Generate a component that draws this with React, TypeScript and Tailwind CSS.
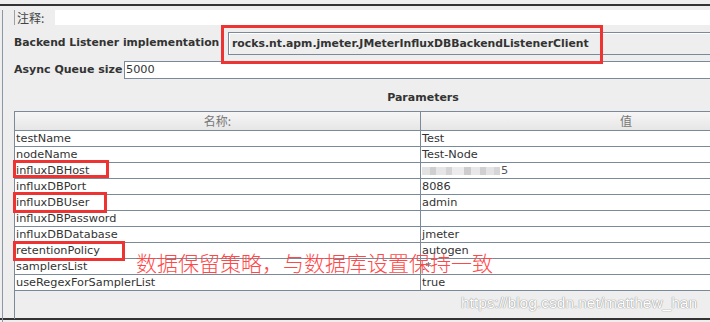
const params: [string, string | null][] = [
  ['testName', 'Test'],
  ['nodeName', 'Test-Node'],
  ['influxDBHost', null],
  ['influxDBPort', '8086'],
  ['influxDBUser', 'admin'],
  ['influxDBPassword', ''],
  ['influxDBDatabase', 'jmeter'],
  ['retentionPolicy', 'autogen'],
  ['samplersList', '.*'],
  ['useRegexForSamplerList', 'true'],
];

// pixelated (masked) host address
function MaskedHost() {
  return (
    <div className="flex items-center h-full">
      <span className="w-[8px] h-[8px] bg-[#e2e2e2]" />
      <span className="w-[6px] h-[8px] bg-[#cfcfcf]" />
      <span className="w-[10px] h-[8px] bg-[#e6e6e6]" />
      <span className="w-[6px] h-[8px] bg-[#d4d4d4]" />
      <span className="w-[12px] h-[8px] bg-[#ececec]" />
      <span className="w-[7px] h-[8px] bg-[#cdcdcd]" />
      <span className="w-[9px] h-[8px] bg-[#e8e8e8]" />
      <span className="w-[6px] h-[8px] bg-[#d0d0d0]" />
      <span className="w-[8px] h-[8px] bg-[#e4e4e4]" />
      <span className="w-[6px] h-[8px] bg-[#d6d6d6]" />
      <span className="text-[#555] ml-[1px]">5</span>
    </div>
  );
}

export default function App() {
  return (
    <div className="relative w-[710px] h-[322px] overflow-hidden bg-[#eeeeee] pt-[4px] font-['DejaVu_Sans',sans-serif] text-[#333333]">
      <div className="h-[316px] border-t-2 border-b-2 border-[#333333]">
        <div className="h-full ml-[2px] border-l border-[#8a98a6] pl-[11px] w-[830px]">
          {/* comment */}
          <div className="mt-[4px] flex h-[15px]">
            <div className="w-[41px] border-l border-[#a0a0a0] bg-[#eeeeee] text-[12px] leading-[15px] pl-[2px] font-['Noto_Sans_CJK_SC',sans-serif] text-[#444]">
              注释:
            </div>
            <div className="flex-1 bg-white" />
          </div>

          {/* implementation */}
          <div className="mt-[7px] flex h-[23px] items-center">
            <div className="w-[214px] text-[10.8px] font-bold whitespace-nowrap">Backend Listener implementation</div>
            <div className="flex-1 h-[23px] border-t border-b border-l border-[#7a8a99] bg-[#eeeeee] shadow-[inset_1px_1px_0_#ffffff] pl-[3px] text-[10.85px] font-bold leading-[21px] whitespace-nowrap">
              rocks.nt.apm.jmeter.JMeterInfluxDBBackendListenerClient
            </div>
          </div>

          {/* queue size */}
          <div className="mt-[6px] flex h-[18px]">
            <div className="w-[110px] text-[11px] font-bold leading-[18px] whitespace-nowrap">Async Queue size</div>
            <div className="flex-1 bg-white border-t border-l border-b border-[#7a8a99] text-[11.3px] leading-[16px] pl-[1px]">5000</div>
          </div>

          {/* parameters */}
          <div className="mt-[11px] h-[16px] text-center text-[11px] font-bold leading-[16px]">Parameters</div>
          <div className="mt-[5px] h-[208px] border-t border-l border-[#7a8a99]">
            <div className="grid grid-cols-[405px_411px] h-[19px] border-b border-[#7a8a99] bg-[linear-gradient(#f6f6f6,#e6e6e6)] text-[12px] text-[#777] font-['Noto_Sans_CJK_SC',sans-serif] leading-[18px]">
              <div className="text-center">名称:</div>
              <div className="text-center border-l border-[#7a8a99]">值</div>
            </div>
            {params.map(([name, value]) => (
              <div key={name} className="grid grid-cols-[405px_411px] h-[16px] bg-white border-b border-[#7a8a99] text-[11.3px] leading-[15px]">
                <div className="pl-[1px] whitespace-nowrap">{name}</div>
                <div className="pl-[1px] border-l border-[#7a8a99] whitespace-nowrap">
                  {value === null ? <MaskedHost /> : value}
                </div>
              </div>
            ))}
          </div>
        </div>
      </div>

      {/* annotations */}
      <div className="absolute left-[221px] top-[25px] w-[382px] h-[39px] border-[3px] border-[#ee3333]" />
      <div className="absolute left-[13px] top-[160px] w-[96px] h-[18px] border-[3px] border-[#ee3333]" />
      <div className="absolute left-[13px] top-[192px] w-[94px] h-[21px] border-[3px] border-[#ee3333]" />
      <div className="absolute left-[13px] top-[241px] w-[112px] h-[20px] border-[3px] border-[#ee3333]" />
      <div className="absolute left-[136px] top-[252px] text-[21px] leading-none text-[#ff4848] font-['Noto_Sans_CJK_SC',sans-serif] font-light whitespace-nowrap">
        数据保留策略，与数据库设置保持一致
      </div>
      <div className="absolute left-[461px] top-[294px] text-[15.5px] leading-[18px] text-white font-['Liberation_Sans',sans-serif] [text-shadow:0_0_1px_#8a8a8a,0_0_1px_#8a8a8a] whitespace-nowrap">
        https://blog.csdn.net/matthew_han
      </div>
    </div>
  );
}
